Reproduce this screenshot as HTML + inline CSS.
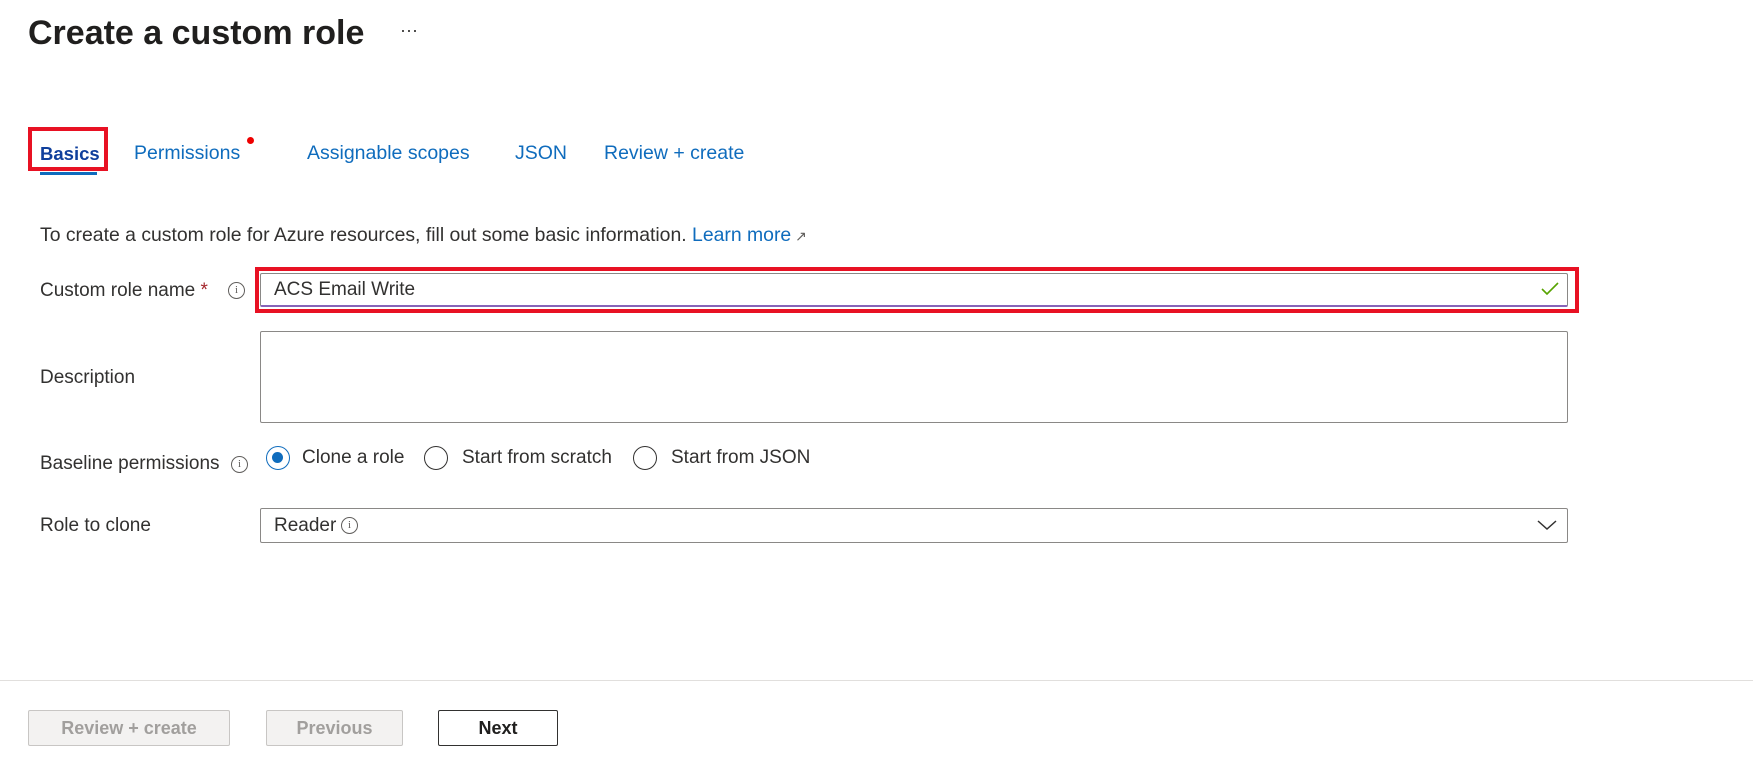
<!DOCTYPE html>
<html><head><meta charset="utf-8"><style>
body{margin:0;width:1753px;height:774px;background:#fff;font-family:"Segoe UI","Liberation Sans",sans-serif;color:#323130;position:relative;overflow:hidden}
.a{position:absolute;white-space:nowrap}
.tab{position:absolute;top:142px;font-size:19.5px;color:#0f6cbd}
.lbl{position:absolute;font-size:19px;color:#323130}
.box{position:absolute;left:260px;width:1308px;border:1px solid #8a8886;border-radius:2px;box-sizing:border-box;background:#fff}
.info{position:absolute;width:15px;height:15px;border:1px solid #605e5c;border-radius:50%;font-size:11px;line-height:15px;text-align:center;color:#605e5c;font-family:"Liberation Serif",serif}
.radio{position:absolute;top:446px;width:24px;height:24px;border:1.5px solid #323130;border-radius:50%;box-sizing:border-box}
.btn{position:absolute;top:710px;height:36px;box-sizing:border-box;border:1px solid #c8c6c4;background:#f3f2f1;color:#a19f9d;font-size:18px;font-weight:600;text-align:center;line-height:34px;border-radius:2px}
</style></head><body>
<div class="a" style="left:28px;top:14px;font-size:34px;font-weight:600;color:#201f1e">Create a custom role</div>
<div class="a" style="left:400px;top:20px;font-size:18px;color:#323130">···</div>

<div class="tab" style="left:40px;font-weight:600;color:#0f3f9c;font-size:18.5px;top:143px">Basics</div>
<div class="a" style="left:28px;top:127px;width:80px;height:44px;border:4px solid #e81123;box-sizing:border-box"></div>
<div class="a" style="left:40px;top:172px;width:57px;height:3px;background:#0f6cbd"></div>
<div class="tab" style="left:134px">Permissions</div>
<div class="a" style="left:247px;top:137px;width:7px;height:7px;border-radius:50%;background:#e00"></div>
<div class="tab" style="left:307px">Assignable scopes</div>
<div class="tab" style="left:515px">JSON</div>
<div class="tab" style="left:604px">Review + create</div>

<div class="lbl" style="left:40px;top:224px;font-size:19.4px">To create a custom role for Azure resources, fill out some basic information. <span style="color:#0f6cbd">Learn more</span><span style="color:#605e5c;font-size:14px"> ↗</span></div>

<div class="lbl" style="left:40px;top:280px">Custom role name <span style="color:#a4262c">*</span></div>
<div class="info" style="left:228px;top:282px">i</div>
<div class="a" style="left:255px;top:267px;width:1324px;height:46px;border:4px solid #e81123;box-sizing:border-box"></div>
<div class="box" style="top:273px;height:34px;border-bottom:2px solid #8764b8"></div>
<div class="lbl" style="left:274px;top:279px">ACS Email Write</div>
<svg class="a" style="left:1540px;top:281px" width="20" height="16" viewBox="0 0 20 16"><path d="M2 8 L7 13 L18 2" fill="none" stroke="#57a300" stroke-width="1.6"/></svg>

<div class="lbl" style="left:40px;top:367px">Description</div>
<div class="box" style="top:331px;height:92px"></div>

<div class="lbl" style="left:40px;top:453px">Baseline permissions</div>
<div class="info" style="left:231px;top:456px">i</div>
<div class="radio" style="left:266px;border-color:#0f6cbd"><div style="position:absolute;left:5px;top:5px;width:11px;height:11px;border-radius:50%;background:#0f6cbd"></div></div>
<div class="lbl" style="left:302px;top:447px">Clone a role</div>
<div class="radio" style="left:424px"></div>
<div class="lbl" style="left:462px;top:447px">Start from scratch</div>
<div class="radio" style="left:633px"></div>
<div class="lbl" style="left:671px;top:447px">Start from JSON</div>

<div class="lbl" style="left:40px;top:515px">Role to clone</div>
<div class="box" style="top:508px;height:35px"></div>
<div class="lbl" style="left:274px;top:515px">Reader</div>
<div class="info" style="left:341px;top:517px">i</div>
<svg class="a" style="left:1536px;top:518px" width="22" height="14" viewBox="0 0 22 14"><path d="M2 3 L11 11 L20 3" fill="none" stroke="#323130" stroke-width="1.5"/></svg>

<div class="a" style="left:0;top:680px;width:1753px;height:1px;background:#e1dfdd"></div>
<div class="btn" style="left:28px;width:202px">Review + create</div>
<div class="btn" style="left:266px;width:137px">Previous</div>
<div class="btn" style="left:438px;width:120px;background:#fff;border:1px solid #323130;color:#201f1e">Next</div>
</body></html>
